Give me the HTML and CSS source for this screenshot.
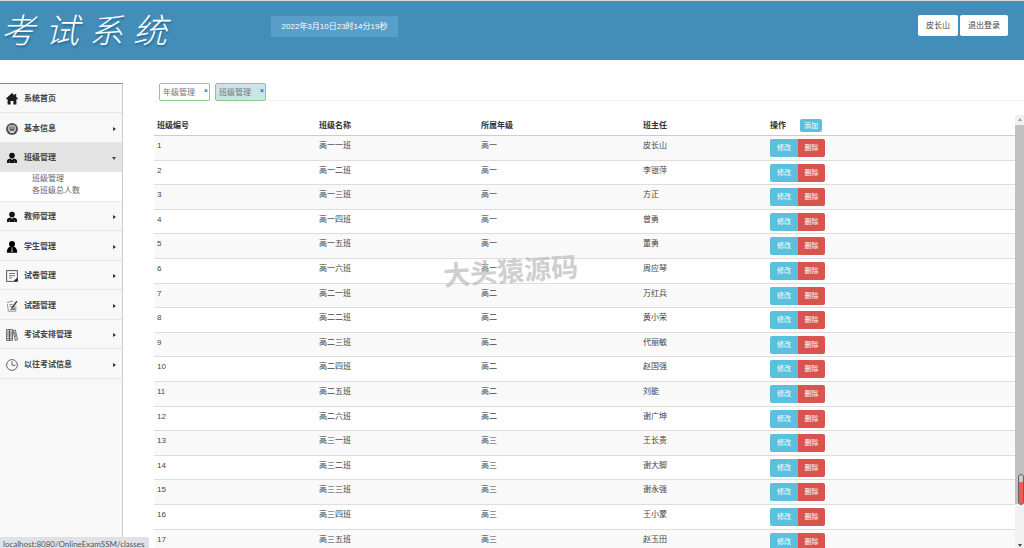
FILE: index.html
```html
<!DOCTYPE html>
<html lang="zh-CN">
<head>
<meta charset="utf-8">
<meta name="viewport" content="width=device-width, initial-scale=1">
<title>考试系统</title>
<link rel="stylesheet" href="styles.css">
</head>
<body>
<header class="topbar">
  <h1 class="brand"><span>考</span><span>试</span><span>系</span><span>统</span></h1>
  <time class="clock">2022年3月10日23时14分19秒</time>
  <div class="account">
    <button class="account-btn" type="button">皮长山</button>
    <button class="account-btn" type="button">退出登录</button>
  </div>
</header>
<div class="layout">
  <nav class="sidebar">
    <a class="item" href="#"><svg class="icon" viewBox="0 0 12 12"><path d="M6 0 0 5.600l.7.800L1.600 6v5.600h3V8h2.800v3.600h3V6l.9.400.7-.8-1.800-1.700V1H8.600v1.400z" fill="#1c1c1c"/></svg>系统首页</a>
    <a class="item tall" href="#"><svg class="icon" viewBox="0 0 12 12"><circle cx="6" cy="6" r="6" fill="#555"/><rect x="2.900" y="2.900" width="6.200" height="5.400" rx="1.300" fill="none" stroke="#fff" stroke-width="1"/><path d="M4.300 5h3.400M4 9.400h4" stroke="#fff" stroke-width=".8"/></svg>基本信息<i class="caret"></i></a>
    <a class="item active" href="#"><svg class="icon" viewBox="0 0 12 12"><circle cx="6" cy="3.600" r="2.800" fill="#111"/><path d="M1 11V8.500Q1.200 7 4.400 6.500L6 8l1.600-1.500Q10.800 7 11 8.500V11z" fill="#111"/><path d="M3.500 9.200v1.300M8.500 9.200v1.300" stroke="#bbb" stroke-width=".6"/></svg>班级管理<i class="caret open"></i></a>
    <div class="submenu"><a href="#">班级管理</a><a href="#">各班级总人数</a></div>
    <a class="item" href="#"><svg class="icon" viewBox="0 0 12 12"><circle cx="6" cy="3.600" r="2.800" fill="#111"/><path d="M1 11V8.500Q1.200 7 4.400 6.500L6 8l1.600-1.500Q10.800 7 11 8.500V11z" fill="#111"/><path d="M3.500 9.200v1.300M8.500 9.200v1.300" stroke="#bbb" stroke-width=".6"/></svg>教师管理<i class="caret"></i></a>
    <a class="item tall" href="#"><svg class="icon" viewBox="0 0 12 12"><circle cx="6" cy="3" r="3" fill="#000"/><path d="M.8 11.800Q.8 7 4 5.500h4q3.200 1.500 3.200 6.300z" fill="#000"/><path d="M5.300 6.500h1.400L6.400 8l.6 2.400-1 .8-1-.8L5.600 8z" fill="#999"/></svg>学生管理<i class="caret"></i></a>
    <a class="item" href="#"><svg class="icon" viewBox="0 0 12 12"><path d="M.6.600h10.800v7.200l-3.600 3.600H.6z" fill="none" stroke="#444" stroke-width=".9"/><path d="M3 3.500h6M3 5.700h6M3 7.900h3" stroke="#555" stroke-width=".8"/><path d="M11.800 7.400v4.400H7.400z" fill="#222"/></svg>试卷管理<i class="caret"></i></a>
    <a class="item tall" href="#"><svg class="icon" viewBox="0 0 12 12"><path d="M1 2.500 7 1M1.500 4l.8 7.200h7.500V6" fill="none" stroke="#888" stroke-width=".9"/><path d="M3.500 4.500h3M3.500 6.200h2M4 9.500h4" stroke="#777" stroke-width=".8"/><path d="m10.400.7 1.100.7-4.300 6.700-2 1.200.4-2.200z" fill="#444"/><path d="m5 6 1.500 3L9 7.500V10H5z" fill="#777"/></svg>试题管理<i class="caret"></i></a>
    <a class="item" href="#"><svg class="icon" viewBox="0 0 12 12"><path d="M.5.500h3v11h-3zM3.500.500h3v11h-3zM7 1.800l2.300-.9 2.300 9.800-2.200.8z" fill="#ddd" stroke="#555" stroke-width=".8"/><path d="M2 2v6M5 2v6M.5 9.500h6M8.500 3l1.200 5" stroke="#555" stroke-width=".7"/></svg>考试安排管理<i class="caret"></i></a>
    <a class="item tall" href="#"><svg class="icon" viewBox="0 0 12 12"><circle cx="6" cy="6" r="5.400" fill="none" stroke="#555" stroke-width=".9"/><path d="M6 2.300v4h3.500" fill="none" stroke="#555" stroke-width=".9"/></svg>以往考试信息<i class="caret"></i></a>
  </nav>
  <main class="content">
    <div class="tabs">
      <div class="tab"><a href="#">年级管理</a><button class="close" type="button" aria-label="关闭年级管理">×</button></div>
      <div class="tab current"><a href="#">班级管理</a><button class="close" type="button" aria-label="关闭班级管理">×</button></div>
    </div>
    <div class="panel">
      <div class="table-wrap">
        <table class="classes">
          <colgroup><col class="col-data"><col class="col-data"><col class="col-data"><col class="col-teacher"><col></colgroup>
          <thead><tr><th>班级编号</th><th>班级名称</th><th>所属年级</th><th>班主任</th><th><div class="ops-head">操作<button class="add" type="button">添加</button></div></th></tr></thead>
          <tbody>
            <tr><td>1</td><td>高一一班</td><td>高一</td><td>皮长山</td><td><div class="ops"><button class="edit" type="button">修改</button><button class="remove" type="button">删除</button></div></td></tr>
            <tr><td>2</td><td>高一二班</td><td>高一</td><td>李银萍</td><td><div class="ops"><button class="edit" type="button">修改</button><button class="remove" type="button">删除</button></div></td></tr>
            <tr><td>3</td><td>高一三班</td><td>高一</td><td>方正</td><td><div class="ops"><button class="edit" type="button">修改</button><button class="remove" type="button">删除</button></div></td></tr>
            <tr><td>4</td><td>高一四班</td><td>高一</td><td>曾勇</td><td><div class="ops"><button class="edit" type="button">修改</button><button class="remove" type="button">删除</button></div></td></tr>
            <tr><td>5</td><td>高一五班</td><td>高一</td><td>董勇</td><td><div class="ops"><button class="edit" type="button">修改</button><button class="remove" type="button">删除</button></div></td></tr>
            <tr><td>6</td><td>高一六班</td><td>高一</td><td>周应琴</td><td><div class="ops"><button class="edit" type="button">修改</button><button class="remove" type="button">删除</button></div></td></tr>
            <tr><td>7</td><td>高二一班</td><td>高二</td><td>万红兵</td><td><div class="ops"><button class="edit" type="button">修改</button><button class="remove" type="button">删除</button></div></td></tr>
            <tr><td>8</td><td>高二二班</td><td>高二</td><td>黄小荣</td><td><div class="ops"><button class="edit" type="button">修改</button><button class="remove" type="button">删除</button></div></td></tr>
            <tr><td>9</td><td>高二三班</td><td>高二</td><td>代丽敏</td><td><div class="ops"><button class="edit" type="button">修改</button><button class="remove" type="button">删除</button></div></td></tr>
            <tr><td>10</td><td>高二四班</td><td>高二</td><td>赵国强</td><td><div class="ops"><button class="edit" type="button">修改</button><button class="remove" type="button">删除</button></div></td></tr>
            <tr><td>11</td><td>高二五班</td><td>高二</td><td>刘能</td><td><div class="ops"><button class="edit" type="button">修改</button><button class="remove" type="button">删除</button></div></td></tr>
            <tr><td>12</td><td>高二六班</td><td>高二</td><td>谢广坤</td><td><div class="ops"><button class="edit" type="button">修改</button><button class="remove" type="button">删除</button></div></td></tr>
            <tr><td>13</td><td>高三一班</td><td>高三</td><td>王长贵</td><td><div class="ops"><button class="edit" type="button">修改</button><button class="remove" type="button">删除</button></div></td></tr>
            <tr><td>14</td><td>高三二班</td><td>高三</td><td>谢大脚</td><td><div class="ops"><button class="edit" type="button">修改</button><button class="remove" type="button">删除</button></div></td></tr>
            <tr><td>15</td><td>高三三班</td><td>高三</td><td>谢永强</td><td><div class="ops"><button class="edit" type="button">修改</button><button class="remove" type="button">删除</button></div></td></tr>
            <tr><td>16</td><td>高三四班</td><td>高三</td><td>王小蒙</td><td><div class="ops"><button class="edit" type="button">修改</button><button class="remove" type="button">删除</button></div></td></tr>
            <tr><td>17</td><td>高三五班</td><td>高三</td><td>赵玉田</td><td><div class="ops"><button class="edit" type="button">修改</button><button class="remove" type="button">删除</button></div></td></tr>
          </tbody>
        </table>
      </div>
      <div class="scrollbar" aria-hidden="true"><i class="arrow up"></i><div class="track"><div class="thumb"></div></div><i class="arrow down"></i></div>
    </div>
  </main>
</div>
<div class="watermark">大头猿源码</div>
<div class="gauge"></div>
<div class="status">localhost:8080/OnlineExamSSM/classes</div>
</body>
</html>
```
FILE: styles.css
```css
* { box-sizing: border-box; }

body {
  margin: 0;
  height: 100vh;
  overflow: hidden;
  display: flex;
  flex-direction: column;
  background: #fff;
  color: #444;
  font: 8px/12px "Liberation Sans", "Noto Sans CJK SC", sans-serif;
}

a { color: inherit; text-decoration: none; }

button {
  border: 0;
  padding: 0;
  font: inherit;
  color: inherit;
  cursor: pointer;
}

.topbar {
  flex: none;
  display: flex;
  align-items: flex-start;
  height: 60px;
  padding: 0 16px 0 1px;
  border-top: 1px solid #dcdcdc;
  background: #438eb9;
}

.brand {
  display: flex;
  gap: 10px;
  width: 270px;
  margin: 0;
  padding-top: 4px;
  color: #fff;
  font: italic 300 34px/48px "Noto Sans CJK SC", sans-serif;
  text-shadow: 1px 2px 2px #2b6d96;
}

.clock {
  margin-top: 15px;
  padding: 0 8px;
  border-radius: 1px;
  background: #579ec8;
  color: #fff;
  line-height: 21px;
  min-width: 127px;
  text-align: center;
}

.account {
  display: flex;
  gap: 2px;
  margin: 14px 0 0 auto;
}

.account-btn {
  height: 21px;
  padding: 1px 8px 0;
  border-radius: 2px;
  background: #fff;
}

.layout {
  flex: 1;
  min-height: 0;
  display: flex;
  padding-top: 23px;
}

.sidebar {
  flex: none;
  width: 123px;
  border-top: 1px solid #888;
  border-right: 1px solid #ccc;
  background: #f8f8f8;
}

.item {
  display: flex;
  align-items: center;
  height: 29px;
  padding: 2px 6px 0;
  border-bottom: 1px solid #e8e8e8;
  font-weight: 700;
}

.item.tall { height: 30px; }
.item.active { background: #e3e3e3; }

.icon {
  width: 12px;
  height: 12px;
  margin-right: 6px;
}

.caret {
  margin-left: auto;
  border: 2px solid transparent;
  border-left: 3px solid #333;
  border-right: 0;
}

.caret.open {
  border: 2px solid transparent;
  border-top: 3px solid #444;
  border-bottom: 0;
}

.submenu {
  display: flex;
  flex-direction: column;
  height: 30px;
  padding: 1px 32px 0;
  border-bottom: 1px solid #e8e8e8;
  background: #fff;
  color: #666;
  white-space: nowrap;
}

.content {
  flex: 1;
  min-width: 0;
  display: flex;
  flex-direction: column;
  padding-left: 31px;
}

.tabs {
  display: flex;
  gap: 5px;
  height: 18px;
  padding-left: 5px;
  border-bottom: 1px solid #f2f2f2;
}

.tab {
  display: flex;
  align-items: flex-start;
  justify-content: space-between;
  width: 51px;
  height: 18px;
  padding: 0 0 0 3px;
  border: 1px solid #8cc78c;
  border-radius: 2px;
  background: #fff;
  color: #777;
  line-height: 18px;
}

.tab.current { background: #c9e3e6; }

.close {
  padding: 0 1px;
  background: none;
  color: #222;
  font-size: 7px;
  line-height: 13px;
}

.panel {
  flex: 1;
  min-height: 0;
  display: flex;
  margin-top: 14px;
}

.table-wrap {
  flex: 1;
  min-width: 0;
  overflow: hidden;
}

.classes {
  width: 100%;
  border-collapse: separate;
  border-spacing: 0;
  table-layout: fixed;
}

.col-data { width: 162px; }
.col-teacher { width: 127px; }

.classes th {
  height: 21px;
  padding: 1px 3px 0;
  border-bottom: 1px solid #ccc;
  text-align: left;
  color: #333;
}

.classes td {
  height: 25px;
  padding: 4px 3px 2px;
  border-bottom: 1px solid #ddd;
  vertical-align: top;
}

.classes td:last-child { padding-top: 3px; }

.classes tr:nth-child(5n+2) td,
.classes tr:nth-child(5n+4) td { height: 24px; }

.classes tr:nth-child(odd) td { background: #f9f9f9; }

.ops-head {
  display: flex;
  align-items: center;
  gap: 14px;
}

.add {
  width: 22px;
  height: 13px;
  border-radius: 2px;
  background: #5bc0de;
  color: #fff;
  font-size: 7px;
  font-weight: 400;
}

.ops { display: flex; }

.ops button {
  width: 28px;
  height: 18px;
  color: #fff;
  font-size: 7px;
}

.ops .edit {
  border-radius: 2px 0 0 2px;
  background: #5bc0de;
}

.ops .remove {
  width: 27px;
  border-radius: 0 2px 2px 0;
  background: #d9534f;
}

.scrollbar {
  flex: none;
  display: flex;
  flex-direction: column;
  align-items: center;
  width: 9px;
  background: #f1f1f1;
}

.track {
  flex: 1;
  width: 100%;
  padding-top: 3px;
}

.thumb {
  height: 91%;
  background: #c1c1c1;
}

.arrow {
  margin: 3px 0 1px;
  border: 2px solid transparent;
}

.arrow.up { border-top: 0; border-bottom: 3px solid #999; }
.arrow.down { border-bottom: 0; border-top: 3px solid #444; }

.watermark {
  position: absolute;
  left: 443px;
  top: 251px;
  color: #bbb;
  opacity: 0.7;
  font: 700 27px/38px "Noto Sans CJK SC", sans-serif;
  transform: rotate(-4deg);
  pointer-events: none;
}

.gauge {
  position: absolute;
  right: 0;
  top: 474px;
  width: 6px;
  height: 31px;
  border: 1px solid #666;
  border-radius: 3px;
  background: linear-gradient(#ccc 24%, #ee5a5a 24%);
}

.status {
  position: absolute;
  left: 0;
  bottom: 0;
  height: 11px;
  padding: 0 5px 0 3px;
  border-radius: 0 2px 0 0;
  background: #dee1e6;
  color: #555;
  font: 8px/14px Lato, "Noto Sans", sans-serif;
}
```
